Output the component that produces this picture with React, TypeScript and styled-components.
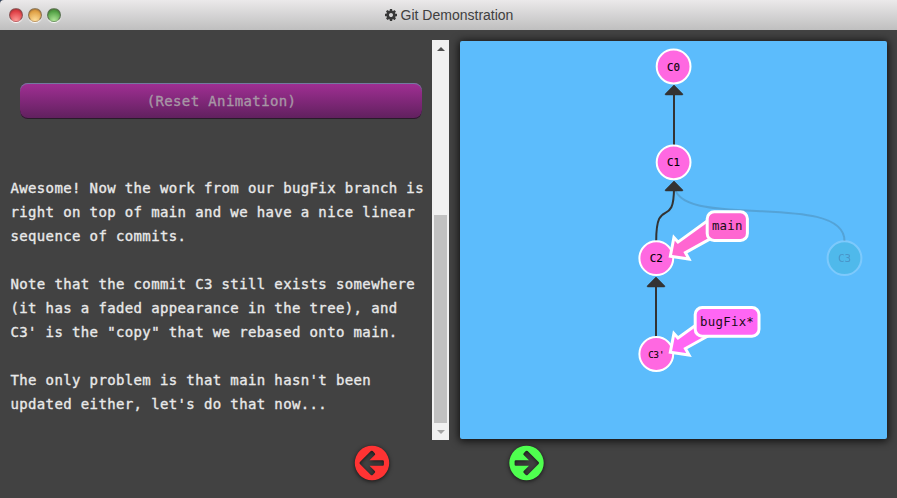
import React from "react";
import styled, { createGlobalStyle, css } from "styled-components";

const mono = '"DejaVu Sans Mono", "Liberation Mono", monospace';

const GlobalStyle = createGlobalStyle`
  * { box-sizing: border-box; }
  html, body { margin: 0; height: 100%; overflow: hidden; background: #424242; }
`;

const Window = styled.div`
  display: flex;
  flex-direction: column;
  width: 897px;
  height: 498px;
  overflow: hidden;
  background: #424242;
`;

const TitleBar = styled.header`
  display: grid;
  grid-template-columns: 1fr auto 1fr;
  align-items: center;
  height: 30px;
  flex: none;
  padding: 0 9px;
  border-top-left-radius: 4px;
  background: linear-gradient(#ebe9ea, #bfbfbf);
  box-shadow: 0 0 0 4px #30415a;
  clip-path: inset(0);
`;

const Lights = styled.div`
  display: flex;
  gap: 5px;
`;

const Light = styled.span<{ $top: string; $bottom: string }>`
  width: 14px;
  height: 14px;
  border-radius: 50%;
  border: 1.5px solid rgba(90, 85, 85, 0.65);
  border-bottom-color: rgba(150, 140, 140, 0.4);
  background: radial-gradient(circle at 50% 95%, ${(p) => p.$bottom}, ${(p) => p.$top} 70%);
  box-shadow: 0 1px 1px #fff, inset 0 1px 1px rgba(60, 30, 30, 0.3);
`;

const Title = styled.h1`
  display: flex;
  align-items: center;
  gap: 4px;
  margin: 0;
  padding-left: 1px;
  font: 400 14px/20px "Liberation Sans", Arial, sans-serif;
  color: #404040;
`;

const Content = styled.main`
  display: flex;
  height: 400px;
  margin-top: 10px;
`;

const Lesson = styled.section`
  display: flex;
  flex-direction: column;
  width: 432px;
  padding: 43px 0 0 10px;
`;

const ResetButton = styled.button`
  width: 402px;
  height: 36px;
  flex: none;
  margin: 0 0 57px 10px;
  padding: 0 0 1px 1px;
  border: 0;
  border-radius: 8px;
  background: linear-gradient(#a12f94, #5f205d);
  box-shadow: inset 0 1px 0 #727b9f, inset 0 -1px 0 #291b2a;
  color: #a797a5;
  font: 14px/24px ${mono};
  letter-spacing: 0.38px;
  -webkit-text-stroke: 0.35px;
`;

const Paragraph = styled.p`
  margin: 0 0 24px;
  padding-left: 0.4px;
  color: #e9e9e9;
  font: 14px/24px ${mono};
  letter-spacing: 0.37px;
  -webkit-text-stroke: 0.35px;
  white-space: pre;
`;

const Scrollbar = styled.div`
  display: flex;
  flex-direction: column;
  align-items: center;
  width: 17px;
  background: #f1f1f1;
`;

const ScrollArrow = styled.span<{ $down?: boolean }>`
  display: flex;
  align-items: center;
  justify-content: center;
  height: 17px;
  &::before {
    content: "";
    border: 4px solid transparent;
    ${(p) =>
      p.$down
        ? css`border-top: 4px solid #a3a3a3; border-bottom: 0;`
        : css`border-bottom: 4px solid #505050; border-top: 0;`}
  }
`;

const Thumb = styled.div`
  width: 13px;
  height: 208px;
  margin-top: auto;
  background: #c1c1c1;
`;

const Canvas = styled.section`
  width: 427px;
  height: 398px;
  margin: 1px 0 0 11px;
  border-radius: 2px;
  background: #5cbcfc;
  box-shadow: 0 1px 9px 1px rgba(0, 0, 0, 0.8);
`;

const Tree = styled.svg`
  display: block;
`;

const NodeText = styled.text<{ $size: number }>`
  font-family: ${mono};
  font-size: ${(p) => p.$size}px;
  text-anchor: middle;
  fill: #000;
  stroke: #000;
  stroke-width: 0.1px;
`;

const BranchText = styled.text`
  font-family: ${mono};
  font-size: 12.4px;
  letter-spacing: 0.25px;
  text-anchor: middle;
  fill: #180d16;
`;

const Controls = styled.nav`
  display: flex;
  justify-content: center;
  gap: 118px;
  padding: 5px 0 0 1px;
`;

const RoundButton = styled.button<{ $color: string }>`
  width: 36px;
  height: 36px;
  padding: 0;
  border: 0;
  background: none;
  color: ${(p) => p.$color};
  svg {
    display: block;
    overflow: visible;
    filter: drop-shadow(0 1px 2px rgba(0, 0, 0, 0.7));
  }
`;

const GearIcon = () => (
  <svg width="12" height="12" viewBox="0 128 1536 1536" fill="#383838">
    <path d="M1024 896q0-106-75-181t-181-75-181 75-75 181 75 181 181 75 181-75 75-181zm512-109v222q0 12-8 23t-20 13l-185 28q-19 54-39 91 35 50 107 138 10 12 10 25t-9 23q-27 37-99 108t-94 71q-12 0-26-9l-138-108q-44 23-91 38-16 136-29 186-7 28-36 28h-222q-14 0-24.5-8.5t-11.5-21.5l-28-184q-49-16-90-37l-141 107q-10 9-25 9-14 0-25-11-126-114-165-168-7-10-7-23 0-12 8-23 15-21 51-66.5t54-70.5q-27-50-41-99l-183-27q-13-2-21-12.5t-8-23.5v-222q0-12 8-23t19-13l186-28q14-46 39-92-40-57-107-138-10-12-10-24 0-10 9-23 26-36 98.5-107.5t94.5-71.5q13 0 26 10l138 107q44-23 91-38 16-136 29-186 7-28 36-28h222q14 0 24.5 8.5t11.5 21.5l28 184q49 16 90 37l142-107q9-9 24-9 13 0 25 10 129 119 165 170 7 8 7 22 0 12-8 23-15 21-51 66.5t-54 70.5q26 50 41 98l183 28q13 2 21 12.5t8 23.5z" />
  </svg>
);

const ArrowCircle = ({ flip }: { flip?: boolean }) => (
  <svg width="36" height="36" viewBox="0 0 36 36">
    <g transform={flip ? "translate(36.5 0) scale(-1 1)" : undefined}>
      <path
        fill="currentColor"
        fillRule="evenodd"
        d="M18 .8a17.2 17.2 0 1 1 0 34.4a17.2 17.2 0 1 1 0-34.4z
        M5.9 17.1L16.9 6.1q.9-.9 1.8 0l2.1 2.1q.9.9 0 1.8L15.5 15.2H28.6q1.3 0 1.3 1.3v3q0 1.3-1.3 1.3H15.5l5.3 5.2q.9.9 0 1.8l-2.1 2.1q-.9.9-1.8 0L5.9 18.9q-.9-.9 0-1.8z"
      />
    </g>
  </svg>
);

interface CommitProps {
  x: number;
  y: number;
  label: string;
  size?: number;
  faded?: boolean;
}

const Commit = ({ x, y, label, size = 10.8, faded }: CommitProps) => (
  <g opacity={faded ? 0.2 : 1}>
    <circle cx={x} cy={y} r={16.9} fill={faded ? "#20b2aa" : "#ff68e1"} stroke="#fff" strokeWidth={2} />
    <NodeText x={x} y={y + 4} $size={size}>{label}</NodeText>
  </g>
);

const Head = ({ x, y }: { x: number; y: number }) => (
  <path d={`M${x} ${y}l8.8 8.9q.6 1-.8 1h-16q-1.4 0-.8-1z`} fill="#333" stroke="#333" strokeWidth={0.6} />
);

interface BranchProps {
  x: number;
  y: number;
  width: number;
  label: string;
  arrowY: number;
  fill: string;
}

const Branch = ({ x, y, width, label, arrowY, fill }: BranchProps) => (
  <g fill={fill} stroke="#fff" strokeWidth={3}>
    <path d="M0 0L3.6-18.8L7.7-14.2L43.7-40.2L51.7-24L15.1-3.7L18.7 2.8Z" transform={`translate(670.3 ${arrowY})`} />
    <rect x={x} y={y} width={width} height={28.6} rx={7} />
    <BranchText x={x + width / 2} y={y + 18.5} stroke="none">{label}</BranchText>
  </g>
);

const CommitTree = () => (
  <Tree width="427" height="398" viewBox="460 41 427 398">
    <g fill="none" stroke="#333" strokeWidth={2}>
      <path d="M844.5 241C844.5 190 675 231 674.5 185" opacity={0.18} />
      <path d="M674 145V92" />
      <path d="M656.2 241C656.2 195 674 230 674 188" />
      <path d="M656 337V284" />
    </g>
    <Head x={674} y={85} />
    <Head x={674} y={181} />
    <Head x={656} y={277} />
    <Commit x={673.6} y={66.5} label="C0" />
    <Commit x={673.6} y={162.3} label="C1" />
    <Commit x={656.3} y={258.2} label="C2" />
    <Commit x={844.5} y={258.2} label="C3" faded />
    <Commit x={656.3} y={354} label="C3'" size={9} />
    <Branch x={707.2} y={211.8} width={40.2} label="main" fill="#ff66d1" arrowY={256.3} />
    <Branch x={695.2} y={307.6} width={63.8} label="bugFix*" fill="#ff66f4" arrowY={352.2} />
  </Tree>
);

export default function App() {
  return (
    <Window>
      <GlobalStyle />
      <TitleBar>
        <Lights>
          <Light $top="#df3f45" $bottom="#ff9995" />
          <Light $top="#dfa044" $bottom="#ffdf9a" />
          <Light $top="#52a044" $bottom="#afe697" />
        </Lights>
        <Title><GearIcon />Git Demonstration</Title>
      </TitleBar>
      <Content>
        <Lesson>
          <ResetButton>(Reset Animation)</ResetButton>
          <Paragraph>{"Awesome! Now the work from our bugFix branch is\nright on top of main and we have a nice linear\nsequence of commits."}</Paragraph>
          <Paragraph>{"Note that the commit C3 still exists somewhere\n(it has a faded appearance in the tree), and\nC3' is the \"copy\" that we rebased onto main."}</Paragraph>
          <Paragraph>{"The only problem is that main hasn't been\nupdated either, let's do that now..."}</Paragraph>
        </Lesson>
        <Scrollbar>
          <ScrollArrow />
          <Thumb />
          <ScrollArrow $down />
        </Scrollbar>
        <Canvas><CommitTree /></Canvas>
      </Content>
      <Controls>
        <RoundButton $color="#ff3333" aria-label="Previous"><ArrowCircle /></RoundButton>
        <RoundButton $color="#4fff4f" aria-label="Next"><ArrowCircle flip /></RoundButton>
      </Controls>
    </Window>
  );
}
